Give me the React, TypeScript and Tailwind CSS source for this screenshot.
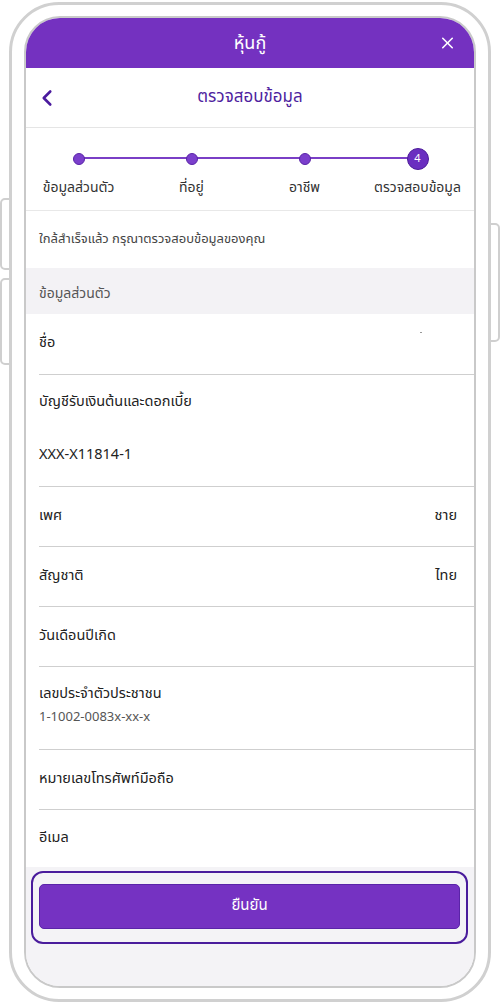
import { X, ChevronLeft } from "lucide-react"

const THAI = "font-['Noto_Sans_Thai','Noto_Sans','Liberation_Sans',sans-serif]"

const steps = ["ข้อมูลส่วนตัว", "ที่อยู่", "อาชีพ", "ตรวจสอบข้อมูล"]

function Row({ label, value, last }: { label: string; value?: string; last?: boolean }) {
  return (
    <div className="flex flex-col">
      <div className="flex h-[59px] items-center justify-between pl-[13px] pr-[17px]">
        <span className="text-[14.5px] text-[#222]">{label}</span>
        {value && <span className="text-[14.5px] text-[#222]">{value}</span>}
      </div>
      {!last && <div className="ml-[13px] h-px bg-[#cfcfcf]" />}
    </div>
  )
}

export default function App() {
  return (
    <div className={`relative h-[1004px] w-[500px] overflow-hidden bg-white ${THAI}`}>
      {/* side buttons */}
      <div className="absolute left-0 top-[198px] h-[72px] w-[14px] rounded-[5px] border-2 border-[#cfcfcf] bg-white" />
      <div className="absolute left-0 top-[278px] h-[87px] w-[14px] rounded-[5px] border-2 border-[#cfcfcf] bg-white" />
      <div className="absolute right-0 top-[223px] h-[119px] w-[14px] rounded-[5px] border-2 border-[#cfcfcf] bg-white" />

      {/* phone frame */}
      <div className="relative ml-[9px] mt-[2px] h-[1000px] w-[482px] rounded-[50px] border-[3px] border-[#d0d0d0] bg-white px-[12px] py-[11px]">
        <div className="flex h-full flex-col overflow-hidden rounded-[36px] border-2 border-[#c9c9c9] bg-white">
          {/* app bar */}
          <div className="relative flex h-[50px] shrink-0 items-center justify-center bg-[#7431c0]">
            <span className="text-[18px] text-white">หุ้นกู้</span>
            <X className="absolute right-[17px] top-1/2 h-[19px] w-[19px] -translate-y-1/2 text-white" strokeWidth={2} />
          </div>

          {/* nav */}
          <div className="relative flex h-[60px] shrink-0 items-center justify-center border-b border-[#e5e5e5]">
            <ChevronLeft className="absolute left-[8px] top-1/2 h-[26px] w-[26px] -translate-y-1/2 text-[#4b1b9e]" strokeWidth={2.4} />
            <span className="text-[17px] text-[#4f1fa0]">ตรวจสอบข้อมูล</span>
          </div>

          {/* stepper */}
          <div className="relative h-[83px] shrink-0 border-b border-[#e8e8e8]">
            <div className="absolute left-[53px] right-[56px] top-[29px] h-[2px] bg-[#7a3fc6]" />
            <div className="-ml-[4px] flex pt-[24px]">
              {steps.map((s, i) => (
                <div key={s} className="flex w-[113px] shrink-0 flex-col items-center">
                  {i < 3 ? (
                    <div className="relative mt-[1px] h-[12px] w-[12px] rounded-full border border-[#5a24a8] bg-[#7b3fcc]" />
                  ) : (
                    <div className="relative -mb-[5px] -mt-[4px] flex h-[22px] w-[22px] items-center justify-center rounded-full border border-[#4d1c9a] bg-[#6a2ec0] text-[11px] text-white">
                      4
                    </div>
                  )}
                  <span className="mt-[12px] whitespace-nowrap text-[14px] text-[#333]">{s}</span>
                </div>
              ))}
            </div>
          </div>

          {/* notice */}
          <div className="flex h-[57px] shrink-0 items-center pl-[13px]">
            <span className="text-[13px] text-[#444]">ใกล้สำเร็จแล้ว กรุณาตรวจสอบข้อมูลของคุณ</span>
          </div>

          {/* section header */}
          <div className="flex h-[46px] shrink-0 items-center bg-[#f3f2f5] pl-[13px] pt-[4px]">
            <span className="text-[14px] text-[#555]">ข้อมูลส่วนตัว</span>
          </div>

          {/* rows */}
          <div className="flex flex-col">
            <div className="flex flex-col">
              <div className="relative flex h-[60px] items-center pl-[13px]">
                <span className="text-[14.5px] text-[#222]">ชื่อ</span>
                <span className="absolute right-[52px] top-[18px] h-px w-[2px] bg-[#999]" />
              </div>
              <div className="ml-[13px] h-px bg-[#cfcfcf]" />
            </div>

            <div className="flex flex-col">
              <div className="flex h-[111px] flex-col pl-[13px]">
                <span className="mt-[17px] text-[14.5px] text-[#222]">บัญชีรับเงินต้นและดอกเบี้ย</span>
                <span className="mt-[31px] text-[14.5px] text-[#222]">XXX-X11814-1</span>
              </div>
              <div className="ml-[13px] h-px bg-[#cfcfcf]" />
            </div>

            <Row label="เพศ" value="ชาย" />
            <Row label="สัญชาติ" value="ไทย" />
            <Row label="วันเดือนปีเกิด" />

            <div className="flex flex-col">
              <div className="flex h-[82px] flex-col pl-[13px]">
                <span className="mt-[17px] text-[14.5px] text-[#222]">เลขประจำตัวประชาชน</span>
                <span className="mt-[2px] text-[13px] text-[#555]">1-1002-0083x-xx-x</span>
              </div>
              <div className="ml-[13px] h-px bg-[#cfcfcf]" />
            </div>

            <Row label="หมายเลขโทรศัพท์มือถือ" />
            <div className="flex h-[57px] items-center pl-[13px]">
              <span className="text-[14.5px] text-[#222]">อีเมล</span>
            </div>
          </div>

          {/* footer */}
          <div className="flex flex-1 flex-col bg-[#f4f3f6] pl-[5px] pr-[6px] pt-[4px]">
            <div className="rounded-[12px] border-2 border-[#4a1c9c] px-[6px] pb-[13px] pt-[11px]">
              <button className="flex h-[45px] w-full items-center justify-center rounded-[5px] border border-[#5a24a8] bg-[#7532c2] text-[15px] text-white">
                ยืนยัน
              </button>
            </div>
          </div>
        </div>
      </div>
    </div>
  )
}
